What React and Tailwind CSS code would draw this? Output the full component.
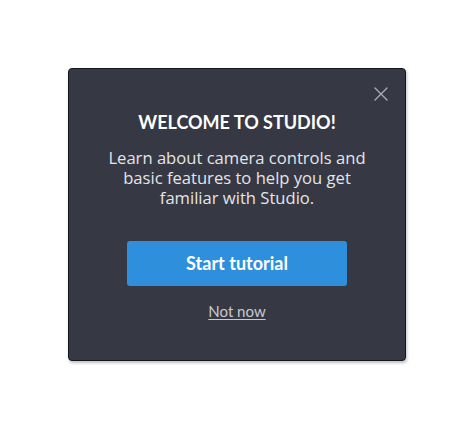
import React from 'react';

// Welcome modal — first-run prompt offering the Studio tutorial.

export default function App() {
  return (
    <div className="flex h-[428px] w-full items-center justify-center bg-white font-['Lato','Liberation_Sans',sans-serif]">
      <div className="relative w-[338px] rounded-[4px] border border-[#15161b] bg-[#363843] px-6 pt-[41px] pb-[37px] text-center shadow-[1px_2px_3px_rgba(0,0,0,0.25)]">
        <button
          type="button"
          aria-label="Close"
          className="absolute right-[17px] top-[18px] flex h-[14px] w-[14px] items-center justify-center text-[#a9abb3]"
        >
          <svg width="14" height="14" viewBox="0 0 14 14" fill="none">
            <path d="M1 1L13 13M13 1L1 13" stroke="currentColor" strokeWidth="1.4" strokeLinecap="round" />
          </svg>
        </button>
        <h1 className="text-[18px] font-bold leading-[24px] text-white">WELCOME TO STUDIO!</h1>
        <p className="mx-auto mt-[14px] max-w-[272px] font-['Open_Sans','Liberation_Sans',sans-serif] text-[16.6px] leading-[20px] text-[#e4e5e8]">
          Learn about camera controls and basic features to help you get familiar with Studio.
        </p>
        <button
          type="button"
          className="mx-auto mt-[33px] flex h-[45px] w-[220px] items-center justify-center rounded-[3px] bg-[#2e8fdd] text-[18px] font-bold text-white"
        >
          Start tutorial
        </button>
        <button
          type="button"
          className="mt-[15px] text-[15px] leading-[20px] text-[#c9cacf] underline underline-offset-2"
        >
          Not now
        </button>
      </div>
    </div>
  );
}
